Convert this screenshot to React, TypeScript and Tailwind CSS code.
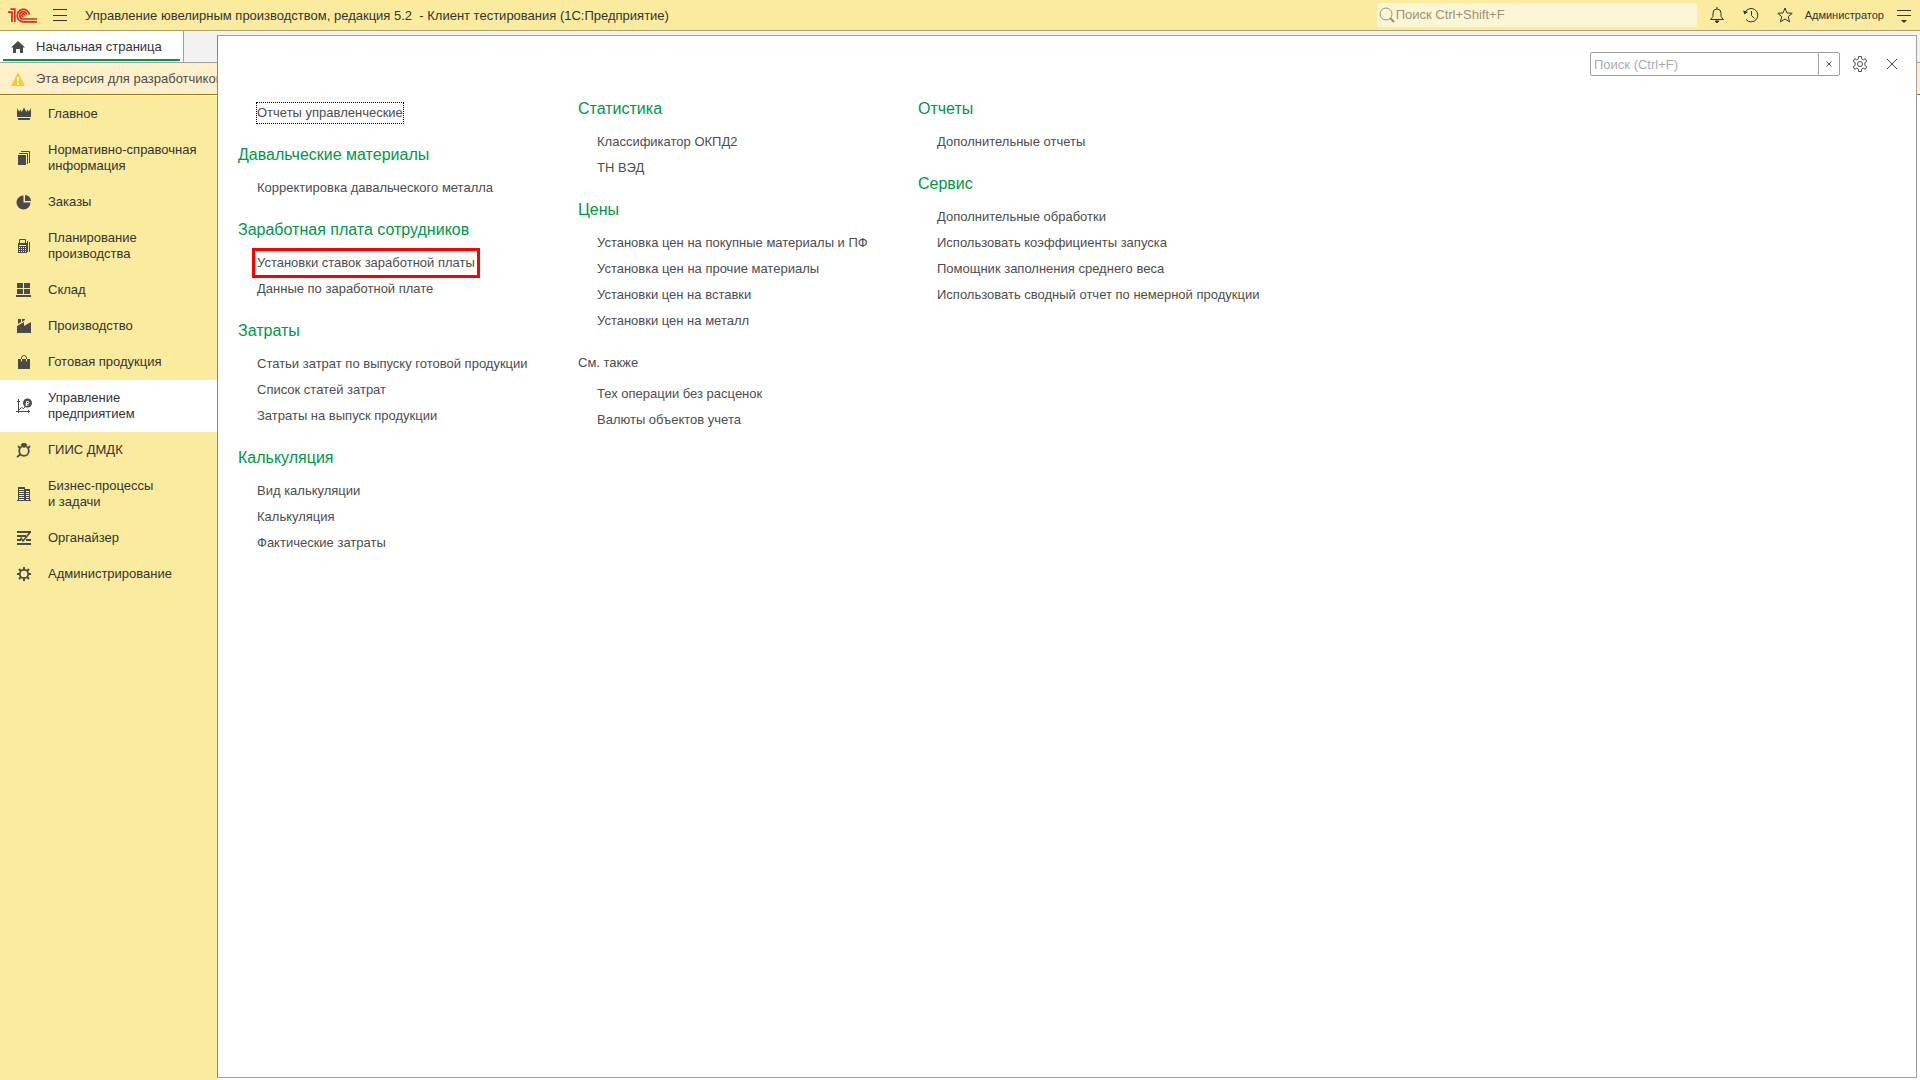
import React from 'react';

interface NavItem {
  label: string;
  icon: React.ReactNode;
  active?: boolean;
}

interface MenuLink {
  label: string;
  focused?: boolean;
  marked?: boolean;
}

interface MenuGroup {
  title?: string;
  plain?: boolean;
  links: MenuLink[];
}

const navItems: NavItem[] = [
  {
    label: 'Главное',
    icon: <path d="M1 2l2 3.500 1.500-2L5.500 6 8 1.500 10.500 6l1-2.500 1.500 2L15 2v9H1zM2 12h12v2H2z" />,
  },
  {
    label: 'Нормативно-справочная информация',
    icon: (
      <>
        <path d="M2 5h8v10H2z" />
        <path d="M3 3.500h8.500V14M5 1.500h8.500V13" fill="none" stroke="currentColor" />
      </>
    ),
  },
  {
    label: 'Заказы',
    icon: (
      <>
        <path d="M7.500 1.500V8.500H14.500A7 7 0 1 1 7.500 1.500z" />
        <path d="M9 1a6 6 0 0 1 6 6H9z" />
      </>
    ),
  },
  {
    label: 'Планирование производства',
    icon: (
      <>
        <path d="M3.500 5.500v-4h6v4" fill="none" stroke="currentColor" />
        <path
          fillRule="evenodd"
          d="M2 5h9v10H2zM3 7v1h7V7zM3 9v1h1V9zM5 9v1h1V9zM7 9v1h1V9zM9 9v1h1V9zM3 11v1h1v-1zM5 11v1h1v-1zM7 11v1h1v-1zM9 11v1h1v-1zM3 13v1h1v-1zM5 13v1h1v-1zM7 13v1h1v-1zM9 13v1h1v-1z"
        />
        <path d="M11 3h1v11h-1zM13 4h1v10h-1z" />
      </>
    ),
  },
  {
    label: 'Склад',
    icon: <path d="M1 1h6v5H1zM8 1h6v5H8zM1 7h6v5H1zM8 7h6v5H8zM0 13h15v2H0z" />,
  },
  {
    label: 'Производство',
    icon: <path d="M2 1h3v3L2 6zM6 1h3v1L6 4zM1 8l7-4v4l7-4v11H1z" />,
  },
  {
    label: 'Готовая продукция',
    icon: (
      <>
        <path d="M2 5h12v10H2z" />
        <path d="M5.500 7V4a2.500 2.500 0 0 1 5 0v3" fill="none" stroke="currentColor" />
        <path d="M5.500 5v2.500M10.500 5v2.500" fill="none" stroke="#fbeb9e" />
      </>
    ),
  },
  {
    label: 'Управление предприятием',
    active: true,
    icon: (
      <>
        <path d="M2.500 1v14M0 13.500h14M1 3.500h3M12.500 12v3M3 12l2.500-2.500 2 1L10 8" fill="none" stroke="currentColor" />
        <circle cx="11.500" cy="5" r="4.500" />
        <path d="M10.500 8V3.500h1.500a1 1 0 0 1 0 2H9.500M9.500 7h3" fill="none" stroke="#fff" />
      </>
    ),
  },
  {
    label: 'ГИИС ДМДК',
    icon: (
      <>
        <circle cx="8" cy="9" r="4.800" fill="none" stroke="currentColor" strokeWidth="1.800" />
        <path d="M8 6L4.500 3 6.500 1h3L11.500 3z" />
        <path d="M5 12l-4 3M2 4l2 2M14 4l-2 2" fill="none" stroke="currentColor" strokeWidth="1.800" />
      </>
    ),
  },
  {
    label: 'Бизнес-процессы и\u00a0задачи',
    icon: (
      <path
        fillRule="evenodd"
        d="M2 1h7v2h5v11h1v1H1v-1h1zM3 3v1h5V3zM3 5v1h5V5zM3 7v1h5V7zM3 9v1h5V9zM3 11v1h5v-1zM3 13v1h5v-1zM10 5v1h3V5zM10 7v1h3V7zM10 9v1h3V9zM10 11v1h3v-1zM10 13v1h3v-1z"
      />
    ),
  },
  {
    label: 'Органайзер',
    icon: (
      <>
        <path d="M1 2h14M1 6h9M1 10h4M10 10h5M1 14h14" fill="none" stroke="currentColor" strokeWidth="2" />
        <path d="M4.500 7.500L7 11l7-8.500" fill="none" stroke="currentColor" strokeWidth="1.600" />
      </>
    ),
  },
  {
    label: 'Администрирование',
    icon: (
      <>
        <circle cx="8" cy="8" r="4.200" fill="none" stroke="currentColor" strokeWidth="1.800" />
        <path
          d="M8 1v3M8 12v3M1 8h3M12 8h3M3 3l2 2M11 11l2 2M3 13l2-2M11 5l2-2"
          fill="none"
          stroke="currentColor"
          strokeWidth="2"
        />
      </>
    ),
  },
];

const columns: MenuGroup[][] = [
  [
    { links: [{ label: 'Отчеты управленческие', focused: true }] },
    { title: 'Давальческие материалы', links: [{ label: 'Корректировка давальческого металла' }] },
    {
      title: 'Заработная плата сотрудников',
      links: [{ label: 'Установки ставок заработной платы', marked: true }, { label: 'Данные по заработной плате' }],
    },
    {
      title: 'Затраты',
      links: [
        { label: 'Статьи затрат по выпуску готовой продукции' },
        { label: 'Список статей затрат' },
        { label: 'Затраты на выпуск продукции' },
      ],
    },
    {
      title: 'Калькуляция',
      links: [{ label: 'Вид калькуляции' }, { label: 'Калькуляция' }, { label: 'Фактические затраты' }],
    },
  ],
  [
    { title: 'Статистика', links: [{ label: 'Классификатор ОКПД2' }, { label: 'ТН ВЭД' }] },
    {
      title: 'Цены',
      links: [
        { label: 'Установка цен на покупные материалы и ПФ' },
        { label: 'Установка цен на прочие материалы' },
        { label: 'Установки цен на вставки' },
        { label: 'Установки цен на металл' },
      ],
    },
    {
      title: 'См. также',
      plain: true,
      links: [{ label: 'Тех операции без расценок' }, { label: 'Валюты объектов учета' }],
    },
  ],
  [
    { title: 'Отчеты', links: [{ label: 'Дополнительные отчеты' }] },
    {
      title: 'Сервис',
      links: [
        { label: 'Дополнительные обработки' },
        { label: 'Использовать коэффициенты запуска' },
        { label: 'Помощник заполнения среднего веса' },
        { label: 'Использовать сводный отчет по немерной продукции' },
      ],
    },
  ],
];

const Logo: React.FC = () => (
  <svg viewBox="0 0 30 15" className="h-[15px] w-[30px]" fill="none" stroke="#dc2a1f" strokeWidth="1.700">
    <path d="M0 4.200h4V14M2.500 1.200h4.300V14" />
    <path d="M21.500 6.500A6.200 6.200 0 1 0 15.500 13.800H29" />
    <path d="M18.800 6.500A3.600 3.600 0 1 0 15.500 11H29" />
    <path d="M16.500 7.500a1.300 1.300 0 1 0-1 1" />
  </svg>
);

const IconButton: React.FC<{ label: string; children: React.ReactNode }> = ({ label, children }) => (
  <button type="button" aria-label={label} className="flex size-4 items-center justify-center">
    <svg viewBox="0 0 16 16" className="size-4" fill="none" stroke="currentColor">
      {children}
    </svg>
  </button>
);

const TopBar: React.FC = () => (
  <header className="flex h-[31px] items-center border-b border-[#aaa267] bg-[#fbeb9e] px-2 text-[#333]">
    <Logo />
    <button type="button" aria-label="Меню" className="ml-[15px] flex h-4 w-[14px] flex-col justify-between py-[2px]">
      <span className="h-px w-full bg-[#333]" />
      <span className="h-px w-full bg-[#333]" />
      <span className="h-px w-full bg-[#333]" />
    </button>
    <h1 className="ml-[18px] pt-[2px] text-[13px] whitespace-pre">
      {'Управление ювелирным производством, редакция 5.2  - Клиент тестирования (1С:Предприятие)'}
    </h1>
    <label className="ml-auto flex h-6 w-[320px] items-center rounded-xs bg-[#fdf6d6] pl-[2px]">
      <svg viewBox="0 0 16 16" className="size-4" fill="none" stroke="#948f77">
        <circle cx="7" cy="7" r="6" />
        <path d="M11 11l4 4" strokeWidth="2" />
      </svg>
      <input
        type="text"
        aria-label="Глобальный поиск"
        placeholder="Поиск Ctrl+Shift+F"
        className="min-w-0 flex-1 pl-px text-[13px] outline-none placeholder:text-[#97927a]"
      />
    </label>
    <div className="ml-3 flex items-center gap-[18px]">
      <IconButton label="Уведомления">
        <path d="M1.500 12.500h13L12 9.500V6a4 4 0 0 0-8 0v3.500zM8 2V0" />
        <path d="M6 14h4l-2 2z" fill="currentColor" />
      </IconButton>
      <IconButton label="История">
        <path d="M2 5.500A6.700 6.700 0 1 1 3 12.500M8.500 4v4.500l3 3" />
        <path d="M0 3.500l1.500 4L5 5z" fill="currentColor" stroke="none" />
      </IconButton>
      <IconButton label="Избранное">
        <path d="M8 1l2 5 5.200.3-4 3.400 1.400 5.200L8 12l-4.600 2.900 1.400-5.200-4-3.400L6 6z" />
      </IconButton>
    </div>
    <button type="button" className="ml-3 text-[11px]">
      Администратор
    </button>
    <button type="button" aria-label="Настройки окна" className="ml-3">
      <svg viewBox="0 0 16 16" className="size-4" fill="none" stroke="currentColor">
        <path d="M1 3.500h14M1 8.500h14" />
        <path d="M5 13h6l-3 3z" fill="currentColor" stroke="none" />
      </svg>
    </button>
  </header>
);

const Sidebar: React.FC = () => (
  <nav className="w-[217px] bg-[#fbeb9e]">
    {navItems.map((item) => (
      <a
        key={item.label}
        href="#"
        className={`flex items-center py-[10px] pl-4 text-[13px] leading-4 text-[#333] ${item.active ? 'bg-white' : ''}`}
      >
        <svg viewBox="0 0 16 16" className="size-4 shrink-0 text-[#4a4a4a]" fill="currentColor">
          {item.icon}
        </svg>
        <span className="ml-4 w-[155px]">{item.label}</span>
      </a>
    ))}
  </nav>
);

const Group: React.FC<{ group: MenuGroup }> = ({ group }) => (
  <section>
    {group.title && (
      <h2
        className={
          group.plain ? 'mb-[6px] text-[13px] leading-6 text-[#4d4d4d]' : 'mb-2 text-[16px] leading-6 text-[#009646]'
        }
      >
        {group.title}
      </h2>
    )}
    <ul className="pl-[19px]">
      {group.links.map((link) => (
        <li key={link.label} className="flex h-[26px] items-center whitespace-nowrap">
          <a
            href="#"
            className={`leading-5 ${link.focused ? 'outline-1 outline-black outline-dotted' : ''} ${
              link.marked ? 'outline-3 outline-offset-2 outline-[#ff0000]' : ''
            }`}
          >
            {link.label}
          </a>
        </li>
      ))}
    </ul>
  </section>
);

const SectionPanel: React.FC = () => (
  <main className="absolute top-[35px] right-[3px] bottom-[2px] left-[217px] border border-[#a0a0a0] border-l-[#8f8a5c] bg-white text-[13px] text-[#4d4d4d]">
    <div className="flex items-center justify-end pt-4 pr-4">
      <div className="flex h-6 w-[250px] items-center rounded-xs border border-[#a0a0a0]">
        <input
          type="text"
          aria-label="Поиск по разделу"
          placeholder="Поиск (Ctrl+F)"
          className="h-full min-w-0 flex-1 pl-[3px] outline-none placeholder:text-[#aaa]"
        />
        <button
          type="button"
          aria-label="Очистить"
          className="flex h-full w-[21px] items-center justify-center border-l border-[#a0a0a0]"
        >
          <svg viewBox="0 0 6 6" className="size-[6px]" fill="none" stroke="currentColor">
            <path d="M.5.5l5 5M5.500.5l-5 5" />
          </svg>
        </button>
      </div>
      <div className="ml-3 flex items-center gap-4">
        <IconButton label="Настройки">
          <circle cx="8" cy="8" r="2.500" />
          <path d="M6.500.5h3v2.300l1.800 1 2-1.100 1.500 2.600-1.900 1.200v3l1.900 1.200-1.500 2.600-2-1.100-1.800 1v2.300h-3v-2.300l-1.800-1-2 1.100-1.500-2.600 1.900-1.200v-3L1.200 5.300l1.500-2.600 2 1.100 1.800-1z" />
        </IconButton>
        <IconButton label="Закрыть">
          <path d="M3 3l10 10M13 3L3 13" />
        </IconButton>
      </div>
    </div>
    <div className="grid grid-cols-[340px_340px_auto] pt-5 pl-5">
      {columns.map((groups, i) => (
        <div key={i} className={`flex flex-col gap-[17px] ${i === 0 ? 'pt-1' : 'pt-px'}`}>
          {groups.map((group, j) => (
            <Group key={j} group={group} />
          ))}
        </div>
      ))}
    </div>
  </main>
);

export default function App() {
  return (
    <div className="relative flex min-h-screen flex-col bg-white font-['Liberation_Sans',Arial,sans-serif]">
      <TopBar />
      <div className="flex h-8 border-b border-[#a0a0a0] bg-[#f2f2f2]">
        <a
          href="#"
          className="flex w-[184px] items-center border-r border-[#a0a0a0] bg-white px-[3px] text-[13px] text-[#333]"
        >
          <span className="flex h-7 w-full items-center border-b-2 border-[#009646] pt-[2px] pl-2">
            <svg viewBox="0 0 14 12" className="h-3 w-[14px] text-[#4a4a4a]" fill="currentColor">
              <path d="M7 0l7 6.500h-2V12H9V8H5v4H2V6.500H0z" />
            </svg>
            <span className="ml-[11px]">Начальная страница</span>
          </span>
        </a>
      </div>
      <div className="flex h-8 items-center border-b border-[#9a7b12] bg-[#fff0cb] pl-[11px] text-[13px] text-[#4d4d4d]">
        <svg viewBox="0 0 14 14" className="size-[14px]">
          <path d="M7 0l7 14H0z" fill="#fccb26" />
          <path d="M6 5h2v4H6zM6 10.500h2v2H6z" fill="#fff" />
        </svg>
        <span className="ml-[11px]">Эта версия для разработчиков</span>
      </div>
      <div className="flex flex-1 pt-px">
        <Sidebar />
      </div>
      <SectionPanel />
    </div>
  );
}
